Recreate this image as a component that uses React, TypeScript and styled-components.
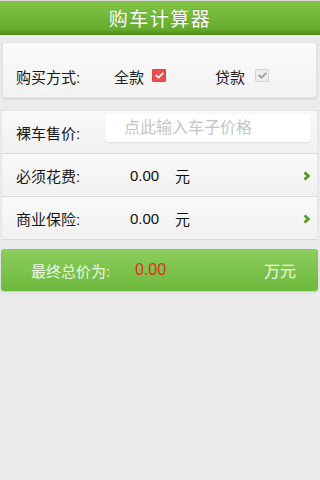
import styled, { createGlobalStyle } from 'styled-components';

const GlobalStyle = createGlobalStyle`
	html, body {
		margin: 0;
		padding: 0;
		background: #ebebeb;
	}
	body {
		font-family: 'Liberation Sans', 'Noto Sans CJK SC', sans-serif;
	}
`;

interface CheckProps {
	checked: boolean;
}

function CheckMark({ checked }: CheckProps) {
	return (
		<CheckBox checked={checked}>
			<svg width='9' height='7' viewBox='0 0 9 7'>
				<polyline
					points='1.2,3.6 3.5,5.6 7.8,1.4'
					fill='none'
					stroke={checked ? '#ffffff' : '#9a9a9a'}
					strokeWidth='1.8'
					strokeLinecap='round'
					strokeLinejoin='round'
				/>
			</svg>
		</CheckBox>
	);
}

function Chevron() {
	return (
		<Arrow>
			<svg width='8' height='10' viewBox='0 0 8 10'>
				<polyline
					points='1.5,1.5 5.5,5 1.5,8.5'
					fill='none'
					stroke='#4f9a1c'
					strokeWidth='2.6'
					strokeLinejoin='miter'
				/>
			</svg>
		</Arrow>
	);
}

function App() {
	return (
		<Page>
			<GlobalStyle />
			<Header>购车计算器</Header>

			<ModeCard>
				<Label>购买方式:</Label>
				<Option>
					全款
					<CheckMark checked />
				</Option>
				<Option className='loan'>
					贷款
					<CheckMark checked={false} />
				</Option>
			</ModeCard>

			<Rows>
				<Row>
					<Label>裸车售价:</Label>
					<PriceInput placeholder='点此输入车子价格' />
				</Row>
				<Row>
					<Label>必须花费:</Label>
					<Value>0.00</Value>
					<Unit>元</Unit>
					<Chevron />
				</Row>
				<Row>
					<Label>商业保险:</Label>
					<Value>0.00</Value>
					<Unit>元</Unit>
					<Chevron />
				</Row>
			</Rows>

			<TotalBar>
				<TotalLabel>最终总价为:</TotalLabel>
				<TotalValue>0.00</TotalValue>
				<TotalUnit>万元</TotalUnit>
			</TotalBar>
		</Page>
	);
}

export default App;

const Page = styled.div`
	width: 320px;
	height: 480px;
	background: #ebebeb;
	border-top: 1px solid #d6d6d6;
	box-sizing: border-box;
	display: flex;
	flex-direction: column;
`;

const Header = styled.header`
	height: 33px;
	display: flex;
	align-items: center;
	justify-content: center;
	background: linear-gradient(#82c446, #66ac2d 85%, #4f8f1e);
	border-bottom: 1px solid #4a861a;
	color: #ffffff;
	font-size: 19px;
	letter-spacing: 1.5px;
	text-shadow: 0 -1px 0 rgba(0, 0, 0, 0.15);
`;

const ModeCard = styled.section`
	margin: 7px 3px 0 2px;
	height: 56px;
	box-sizing: border-box;
	padding: 12px 0 0 13px;
	display: flex;
	align-items: center;
	background: linear-gradient(#fbfbfb, #f2f2f2);
	border: 1px solid #e2e2e2;
	border-radius: 3px;
	box-shadow: 0 1px 2px rgba(0, 0, 0, 0.12);
`;

const Label = styled.span`
	width: 98px;
	flex-shrink: 0;
	font-size: 15px;
	color: #161616;
`;

const Option = styled.span`
	display: flex;
	align-items: center;
	gap: 8px;
	font-size: 15px;
	color: #222;
	width: 104px;

	&.loan {
		gap: 10px;
	}
`;

const CheckBox = styled.span<CheckProps>`
	display: inline-flex;
	align-items: center;
	justify-content: center;
	width: 12px;
	height: 11px;
	margin-top: -2px;
	background: ${(p) => (p.checked ? '#ee4b4f' : '#ececec')};
	border: 1px solid ${(p) => (p.checked ? '#e04348' : '#d4d4d4')};
	border-radius: 1px;
`;

const Rows = styled.div`
	margin-top: 12px;
	display: flex;
	flex-direction: column;
	border-top: 1px solid #e4e4e4;
`;

const Row = styled.div`
	height: 42px;
	margin: 0 2px 0 1px;
	padding-left: 14px;
	display: flex;
	align-items: center;
	background: linear-gradient(#f9f9f9, #f1f1f1);
	border-bottom: 1px solid #d9d9d9;
	border-left: 1px solid #e6e6e6;
	border-right: 1px solid #e6e6e6;
	position: relative;
`;

const PriceInput = styled.input`
	margin-left: -9px;
	width: 206px;
	height: 28px;
	margin-top: -8px;
	box-sizing: border-box;
	border: none;
	border-radius: 3px;
	background: #ffffff;
	box-shadow: 0 1px 2px rgba(0, 0, 0, 0.1);
	padding-left: 19px;
	font-family: 'Liberation Sans', 'Noto Sans CJK SC', sans-serif;
	font-size: 16px;
	color: #333;
	outline: none;

	&::placeholder {
		color: #c4c4c4;
	}
`;

const Value = styled.span`
	margin-left: 16px;
	width: 45px;
	font-size: 15px;
	color: #111;
`;

const Unit = styled.span`
	font-size: 15px;
	color: #111;
`;

const Arrow = styled.span`
	position: absolute;
	right: 6px;
	top: 50%;
	transform: translateY(-40%);
	display: flex;
`;

const TotalBar = styled.section`
	margin: 9px 2px 0 1px;
	height: 42px;
	display: flex;
	align-items: center;
	padding-left: 30px;
	padding-right: 22px;
	background: linear-gradient(#8dcd5d, #6db93d);
	border-radius: 3px;
	box-shadow: 0 1px 2px rgba(0, 0, 0, 0.15);
	font-size: 15px;
`;

const TotalLabel = styled.span`
	width: 104px;
	color: #eef8e4;
`;

const TotalValue = styled.span`
	flex: 1;
	color: #d8321c;
	font-size: 16px;
`;

const TotalUnit = styled.span`
	color: #f3faec;
	font-size: 16px;
`;
